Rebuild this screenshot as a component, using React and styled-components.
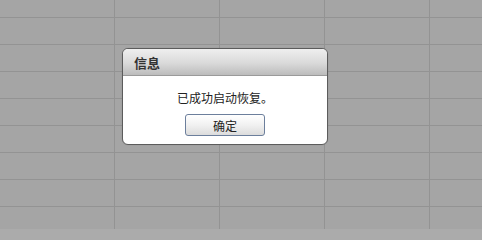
import React from 'react';
import styled, { createGlobalStyle } from 'styled-components';

const GlobalStyle = createGlobalStyle`
  html, body {
    margin: 0;
    padding: 0;
    background: #ababab;
    font-family: 'Liberation Sans', 'Noto Sans CJK SC', sans-serif;
  }
`;

const Page = styled.div`
  position: relative;
  width: 482px;
  height: 229px;
  overflow: hidden;
  background: #ababab;
`;

const Sheet = styled.div`
  display: flex;
  flex-direction: column;
  background: #a5a5a5;
  border-bottom: 1px solid #7c7c7c;
`;

const Row = styled.div`
  display: flex;
  height: ${p => p.h}px;
  border-bottom: ${p => (p.last ? 'none' : '1px solid #939393')};
`;

const Cell = styled.div`
  flex: 0 0 ${p => p.w}px;
  box-sizing: border-box;
  border-right: 1px solid #939393;
`;

const Overlay = styled.div`
  position: absolute;
  left: 122px;
  top: 48px;
`;

const Dialog = styled.div`
  width: 204px;
  height: 95px;
  border: 1px solid #5c5c5c;
  border-radius: 6px;
  background: #fff;
  overflow: hidden;
  display: flex;
  flex-direction: column;
  box-shadow: 0 0 1px rgba(0, 0, 0, 0.2);
`;

const Header = styled.div`
  height: 27px;
  box-sizing: border-box;
  border-bottom: 1px solid #9a9a9a;
  background: linear-gradient(to bottom, #efefef 0%, #d9d9d9 55%, #bcbcbc 100%);
  display: flex;
  align-items: center;
  padding-left: 11px;
  font-family: 'Noto Sans CJK SC', sans-serif;
  font-size: 13px;
  font-weight: bold;
  color: #333;
`;

const Body = styled.div`
  flex: 1;
  display: flex;
  flex-direction: column;
  align-items: center;
  padding-top: 13px;
  gap: 8px;
`;

const Message = styled.div`
  font-family: 'Noto Sans CJK SC', sans-serif;
  font-size: 12px;
  line-height: 17px;
  color: #222;
`;

const Button = styled.button`
  width: 80px;
  height: 22px;
  padding: 0;
  border: 1px solid #6c7f9c;
  border-radius: 3px;
  background: linear-gradient(to bottom, #ffffff 0%, #f1f1f1 50%, #dcdcdc 100%);
  font-family: 'Noto Sans CJK SC', sans-serif;
  font-size: 12px;
  color: #222;
  cursor: pointer;
`;

const columns = [115, 105, 105, 105, 105];
const rows = [17, 26, 26, 26, 26, 26, 26, 26, 25];

export default function App() {
  return (
    <>
      <GlobalStyle />
      <Page>
        <Sheet>
          {rows.map((h, i) => (
            <Row key={i} h={h} last={i === rows.length - 1}>
              {columns.map((w, j) => (
                <Cell key={j} w={w} />
              ))}
            </Row>
          ))}
        </Sheet>
        <Overlay>
          <Dialog>
            <Header>信息</Header>
            <Body>
              <Message>已成功启动恢复。</Message>
              <Button>确定</Button>
            </Body>
          </Dialog>
        </Overlay>
      </Page>
    </>
  );
}
